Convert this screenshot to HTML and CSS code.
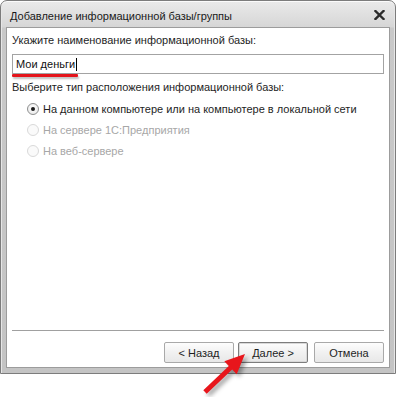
FILE: index.html
```html
<!DOCTYPE html>
<html lang="ru">
<head>
    <meta charset="UTF-8">
    <title>Добавление информационной базы/группы</title>
    <link rel="stylesheet" href="styles.css">
</head>
<body>
    <div class="window">
        <div class="titlebar">
            <span class="title">Добавление информационной базы/группы</span>
            <svg class="close" width="11" height="10" viewBox="0 0 11 10">
                <path d="M1.5 1 L9.5 9 M9.5 1 L1.5 9" stroke="#2b2b2b" stroke-width="2.4" stroke-linecap="square"/>
            </svg>
        </div>
        <div class="client">
            <div class="caption">Укажите наименование информационной базы:</div>
            <div class="field">Мои деньги<span class="caret"></span></div>
            <span class="mark"></span>
            <div class="caption second">Выберите тип расположения информационной базы:</div>
            <div class="options">
                <div class="option"><span class="radio checked"></span>На данном компьютере или на компьютере в локальной сети</div>
                <div class="option disabled"><span class="radio"></span>На сервере 1С:Предприятия</div>
                <div class="option disabled"><span class="radio"></span>На веб-сервере</div>
            </div>
            <div class="footer">
                <div class="buttons">
                    <button class="btn">&lt; Назад</button>
                    <button class="btn default">Далее &gt;</button>
                    <button class="btn cancel">Отмена</button>
                </div>
            </div>
        </div>
    </div>

    <!-- red pointer drawn over the dialog -->
    <svg class="arrow" width="396" height="397" viewBox="0 0 396 397">
        <polygon points="203.3,390.2 228.8,366 224.3,361.3 245,354 236.7,374.3 232.2,369.6 206.7,393.8" fill="#e8161c"/>
    </svg>
</body>
</html>
```

FILE: styles.css
```css
* {
    margin: 0;
    padding: 0;
    box-sizing: border-box;
}

body {
    font-family: "Liberation Sans", Arial, sans-serif;
    font-size: 11px;
    color: #1e1e1e;
    background: #fff;
    width: 396px;
    height: 397px;
    position: relative;
    overflow: hidden;
    white-space: nowrap;
}

.window {
    width: 396px;
    height: 374px;
    border: 1px solid #7c7c7c;
    border-radius: 7px 7px 0 0;
    background: linear-gradient(to bottom, #eaeaea 0, #d6d6d6 26px, #c9c9c9 27px, #c4c4c4 100%);
    padding: 0 5px 5px 5px;
    box-shadow: inset 0 1px 0 #fbfbfb, inset 1px 0 0 #e6e6e6, inset -1px 0 0 #e6e6e6;
    display: flex;
    flex-direction: column;
}

.titlebar {
    height: 26px;
    display: flex;
    align-items: center;
    justify-content: space-between;
    padding: 0 5px 0 4px;
}

.title {
    font-size: 11px;
    color: #1a1a1a;
    margin-top: 4px;
}

.close {
    margin-top: 2px;
}

.client {
    position: relative;
    height: 341px;
    background: #fff;
    border: 1px solid #9c9c9c;
    padding: 5px 5px 4px 5px;
    display: flex;
    flex-direction: column;
}

.caption {
    line-height: 15px;
}

.caption.second {
    margin-top: 6px;
}

.field {
    margin-top: 6px;
    height: 20px;
    border: 1px solid #a3a3a3;
    padding: 0 3px;
    line-height: 18px;
    display: flex;
    align-items: center;
    color: #111;
}

.caret {
    display: inline-block;
    width: 1px;
    height: 13px;
    background: #000;
    margin-left: 1px;
}

.mark {
    position: absolute;
    left: 5px;
    top: 46px;
    width: 66px;
    height: 3px;
    background: #e4141b;
    border-radius: 1px;
    box-shadow: 1px 2px 2px rgba(0, 0, 0, 0.25);
}

.options {
    margin-top: 3px;
    padding-left: 15px;
}

.option {
    height: 21px;
    display: flex;
    align-items: center;
}

.option.disabled {
    color: #a7a7a7;
}

.radio {
    width: 12px;
    height: 12px;
    border-radius: 50%;
    border: 1px solid #8e8f8f;
    background: radial-gradient(circle at 50% 40%, #ffffff 0, #e6e6e6 100%);
    margin-right: 4px;
    position: relative;
}

.radio.checked::after {
    content: "";
    position: absolute;
    left: 3px;
    top: 3px;
    width: 4px;
    height: 4px;
    border-radius: 50%;
    background: #1b1b1b;
}

.option.disabled .radio {
    border-color: #d9d9d9;
    background: #fafafa;
}

.footer {
    margin-top: auto;
    border-top: 1px solid #a0a0a0;
}

.buttons {
    margin-top: 11px;
    display: flex;
    justify-content: flex-end;
    gap: 4px;
}

.btn {
    width: 70px;
    height: 21px;
    font-family: "Liberation Sans", Arial, sans-serif;
    font-size: 11px;
    color: #1e1e1e;
    border: 1px solid #a9a9a9;
    border-radius: 2px;
    background: linear-gradient(to bottom, #fdfdfd 0, #f1f1f1 50%, #e8e8e8 100%);
}

.btn.default {
    border-color: #7d7d7d;
    box-shadow: inset 0 0 0 1px #d9d9d9;
}

.btn.cancel {
    margin-left: 2px;
}

.arrow {
    position: absolute;
    left: 0;
    top: 0;
    pointer-events: none;
    filter: drop-shadow(3px 3px 2px rgba(0, 0, 0, 0.35));
}
```
